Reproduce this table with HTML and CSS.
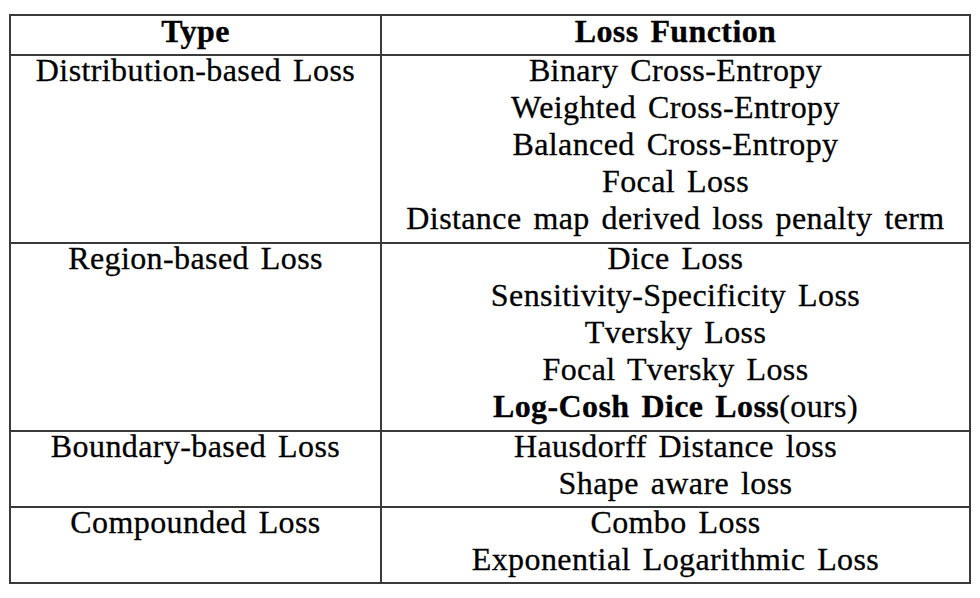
FILE: index.html
```html
<!DOCTYPE html>
<html lang="en">
<head>
<meta charset="utf-8">
<title>Loss Functions</title>
<link rel="stylesheet" href="styles.css">
</head>
<body>
<div class="tbl">
  <div class="row head">
    <div class="c1"><div class="ln">Type</div></div>
    <div class="c2"><div class="ln">Loss Function</div></div>
  </div>
  <div class="row">
    <div class="c1"><div class="ln">Distribution-based Loss</div></div>
    <div class="c2">
      <div class="ln">Binary Cross-Entropy</div>
      <div class="ln">Weighted Cross-Entropy</div>
      <div class="ln">Balanced Cross-Entropy</div>
      <div class="ln">Focal Loss</div>
      <div class="ln">Distance map derived loss penalty term</div>
    </div>
  </div>
  <div class="row">
    <div class="c1"><div class="ln">Region-based Loss</div></div>
    <div class="c2">
      <div class="ln">Dice Loss</div>
      <div class="ln">Sensitivity-Specificity Loss</div>
      <div class="ln">Tversky Loss</div>
      <div class="ln">Focal Tversky Loss</div>
      <div class="ln"><b>Log-Cosh Dice Loss</b>(ours)</div>
    </div>
  </div>
  <div class="row">
    <div class="c1"><div class="ln">Boundary-based Loss</div></div>
    <div class="c2">
      <div class="ln">Hausdorff Distance loss</div>
      <div class="ln">Shape aware loss</div>
    </div>
  </div>
  <div class="row">
    <div class="c1"><div class="ln">Compounded Loss</div></div>
    <div class="c2">
      <div class="ln">Combo Loss</div>
      <div class="ln">Exponential Logarithmic Loss</div>
    </div>
  </div>
</div>
</body>
</html>
```

FILE: styles.css
```css
html, body {
  margin: 0;
  padding: 0;
  background: #ffffff;
}

body {
  font-family: "Liberation Serif", "Times New Roman", serif;
  font-size: 32px;
  letter-spacing: 0.4px;
  word-spacing: 3.5px;
  color: #000000;
  -webkit-text-stroke: 0.3px #000000;
}

.tbl {
  margin: 14px 0 0 9px;
  width: 962px;
  box-sizing: border-box;
  border: 2px solid #3a3a3a;
}

.row {
  display: flex;
  border-top: 2px solid #3a3a3a;
}

.row.head {
  border-top: none;
  font-weight: bold;
}

.c1 {
  width: 369px;
  flex: none;
  text-align: center;
}

.c2 {
  flex: 1;
  border-left: 2px solid #3a3a3a;
  text-align: center;
}

.ln {
  line-height: 29px;
  padding-bottom: 8.2px;
  white-space: nowrap;
}

.head .ln {
  line-height: 31px;
  padding-bottom: 6.7px;
}

b {
  font-weight: bold;
}
```
